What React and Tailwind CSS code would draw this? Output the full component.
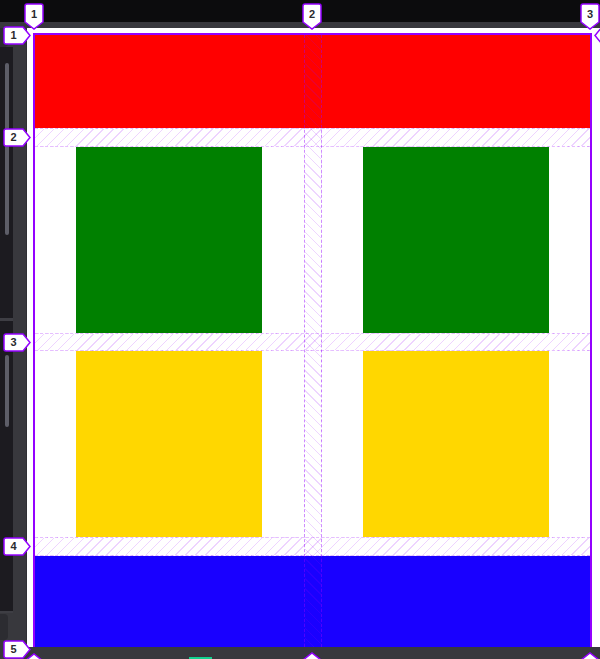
import React from 'react';

const PURPLE = '#9400ff';

// little numbered flags that the grid inspector pins to each grid line
function DownTag({ label, className }) {
  return (
    <div className={`absolute w-[20px] h-[28px] ${className}`}>
      <svg width="20" height="28" viewBox="0 0 20 28" className="absolute inset-0">
        <path d="M3 1H17Q19 1 19 3V19L10 26L1 19V3Q1 1 3 1Z" fill="#fff" stroke={PURPLE} strokeWidth="1.5" />
      </svg>
      <span className="absolute left-0 top-[2px] w-[20px] h-[18px] flex items-center justify-center text-[11px] font-bold text-[#2a2a2e] [font-family:'Liberation_Sans',Arial,sans-serif]">
        {label}
      </span>
    </div>
  );
}

function RightTag({ label, className }) {
  return (
    <div className={`absolute w-[28px] h-[19px] ${className}`}>
      <svg width="28" height="19" viewBox="0 0 28 19" className="absolute inset-0">
        <path d="M3 1H20L27 9.5L20 18H3Q1 18 1 16V3Q1 1 3 1Z" fill="#fff" stroke={PURPLE} strokeWidth="1.5" />
      </svg>
      <span className="absolute left-0 top-0 w-[21px] h-[19px] flex items-center justify-center text-[11px] font-bold text-[#2a2a2e] [font-family:'Liberation_Sans',Arial,sans-serif]">
        {label}
      </span>
    </div>
  );
}

function LeftTag({ className }) {
  return (
    <div className={`absolute w-[28px] h-[19px] ${className}`}>
      <svg width="28" height="19" viewBox="0 0 28 19" className="absolute inset-0">
        <path d="M25 1H8L1 9.5L8 18H25Q27 18 27 16V3Q27 1 25 1Z" fill="#fff" stroke={PURPLE} strokeWidth="1.5" />
      </svg>
    </div>
  );
}

function UpTag({ className }) {
  return (
    <div className={`absolute w-[20px] h-[28px] ${className}`}>
      <svg width="20" height="28" viewBox="0 0 20 28" className="absolute inset-0">
        <path d="M3 27H17Q19 27 19 25V9L10 2L1 9V25Q1 27 3 27Z" fill="#fff" stroke={PURPLE} strokeWidth="1.5" />
      </svg>
    </div>
  );
}

function SidePanel() {
  return (
    <div className="w-[27px] flex flex-col bg-[#38383d] border-r border-[#2f2f34]">
      <div className="h-[19px] w-[8px] bg-[#2c2c31] rounded-br-[4px]" />
      <div className="w-[13px] h-[271px] bg-[#1c1b20] pt-[16px] pl-[5px]">
        <div className="w-[4px] h-[172px] rounded-full bg-[#5d5e68]" />
      </div>
      <div className="w-[13px] h-[3px] bg-[#3e3e44]" />
      <div className="w-[13px] flex-1 bg-[#1c1b20] pt-[34px] pl-[5px]">
        <div className="w-[4px] h-[72px] rounded-full bg-[#5d5e68]" />
      </div>
      <div className="w-[13px] h-[2px] bg-[#3e3e44]" />
      <div className="h-[26px] w-[8px] bg-[#2c2c31] rounded-r-[4px] mt-[1px]" />
      <div className="h-[7px]" />
    </div>
  );
}

export default function App() {
  return (
    <div className="relative w-[600px] h-[659px] overflow-hidden flex flex-col bg-white">
      <div className="h-[22px] bg-[#0c0c0d]" />
      <div className="h-[6px] bg-[#38383d]" />

      <div className="flex flex-1 min-h-0">
        <SidePanel />

        <div className="flex-1 bg-white pl-[6px] pr-[8px] pt-[5px] overflow-hidden">
          <div className="relative grid grid-cols-2 grid-rows-[93px_186px_186px_91px] gap-x-[18px] gap-y-[18.7px] border-2 border-b border-[#9400ff]">
            <div className="col-span-2 bg-[#ff0000]" />
            <div className="justify-self-center w-[186px] h-[186px] bg-[#008000]" />
            <div className="justify-self-center w-[186px] h-[186px] bg-[#008000]" />
            <div className="justify-self-center w-[186px] h-[186px] bg-[#ffd700]" />
            <div className="justify-self-center w-[186px] h-[186px] bg-[#ffd700]" />
            <div className="col-span-2 bg-[#1900ff]" />

            {/* gap overlays */}
            <div className="absolute left-0 right-0 top-[93px] h-[18.7px] border-y border-dashed border-[rgba(170,40,255,0.3)] bg-[image:repeating-linear-gradient(135deg,transparent_0px,transparent_6px,rgba(170,40,255,0.2)_6px,rgba(170,40,255,0.2)_7px)]" />
            <div className="absolute left-0 right-0 top-[297.7px] h-[18.7px] border-y border-dashed border-[rgba(170,40,255,0.3)] bg-[image:repeating-linear-gradient(135deg,transparent_0px,transparent_6px,rgba(170,40,255,0.2)_6px,rgba(170,40,255,0.2)_7px)]" />
            <div className="absolute left-0 right-0 top-[502.4px] h-[18.7px] border-y border-dashed border-[rgba(170,40,255,0.3)] bg-[image:repeating-linear-gradient(135deg,transparent_0px,transparent_6px,rgba(170,40,255,0.2)_6px,rgba(170,40,255,0.2)_7px)]" />
            <div className="absolute top-0 bottom-0 left-[calc(50%-9px)] w-[18px] border-x border-dashed border-[rgba(148,0,255,0.45)] bg-[image:repeating-linear-gradient(45deg,transparent_0px,transparent_6px,rgba(148,0,255,0.16)_6px,rgba(148,0,255,0.16)_7px)]" />
          </div>
        </div>
      </div>

      <div className="relative h-[12px] bg-[#38383d]">
        <div className="absolute left-[189px] bottom-0 w-[23px] h-[2px] bg-[#12d18e]" />
      </div>

      {/* line number flags */}
      <DownTag label="1" className="left-[24px] top-[3px]" />
      <DownTag label="2" className="left-[302px] top-[3px]" />
      <DownTag label="3" className="left-[580px] top-[3px]" />

      <RightTag label="1" className="left-[3px] top-[26px]" />
      <RightTag label="2" className="left-[3px] top-[128px]" />
      <RightTag label="3" className="left-[3px] top-[333px]" />
      <RightTag label="4" className="left-[3px] top-[537px]" />
      <RightTag label="5" className="left-[3px] top-[640px]" />

      <LeftTag className="left-[594px] top-[26px]" />

      <UpTag className="left-[24px] top-[652px]" />
      <UpTag className="left-[302px] top-[651px]" />
      <UpTag className="left-[580px] top-[651px]" />
    </div>
  );
}
